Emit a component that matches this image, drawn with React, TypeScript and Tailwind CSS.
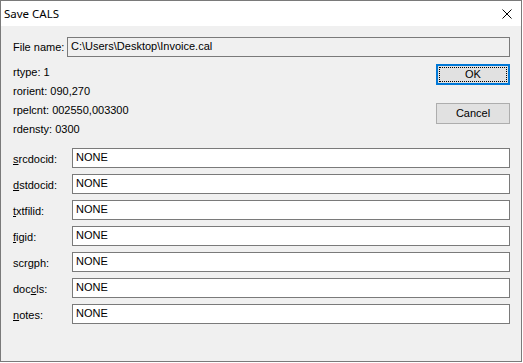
import React from "react";

const font = { fontFamily: '"Liberation Sans", Arial, sans-serif' };

function Field({ label, u, value }: { label: [string, string, string]; u?: boolean; value: string }) {
  return (
    <div className="flex h-[20px] items-center">
      <div className="w-[59px] pt-[2px] text-[11px] leading-[13px] text-black">
        {label[0]}
        <span className="underline decoration-1 underline-offset-[1px]">{label[1]}</span>
        {label[2]}
      </div>
      <div className="flex h-[20px] flex-1 items-start border border-[#7a7a7a] bg-white pl-[3px] pt-[2px] text-[11px] leading-[13px] text-black">
        {value}
      </div>
    </div>
  );
}

export default function App() {
  const fields: [string, string, string][] = [
    ["", "s", "rcdocid:"],
    ["", "d", "stdocid:"],
    ["", "t", "xtfilid:"],
    ["", "f", "igid:"],
    ["scr", "g", "ph:"],
    ["doc", "c", "ls:"],
    ["", "n", "otes:"],
  ];
  return (
    <div className="h-[363px] w-[523px] bg-white" style={font}>
      <div className="flex h-[362px] w-[522px] flex-col border border-[#7a7a7a] bg-[#f0f0f0]">
        <div className="flex h-[25px] items-center justify-between bg-white pl-[3px] pr-[9px]">
          <span className="text-[12px] leading-[14px] text-black" style={{ fontFamily: '"Noto Sans", "Liberation Sans", sans-serif', fontSize: "11.5px" }}>
            Save CALS
          </span>
          <svg width="10" height="10" viewBox="0 0 10 10" className="mt-[1px]">
            <path d="M0.5 0.5 L9.5 9.5 M9.5 0.5 L0.5 9.5" stroke="#000" strokeWidth="1" fill="none" />
          </svg>
        </div>
        <div className="flex flex-col pl-[12px] pr-[11px]">
          <div className="mt-[11px] flex h-[20px] items-center">
            <div className="w-[54px] text-[11px] leading-[13px] text-black">File name:</div>
            <div className="flex h-[20px] w-[443px] items-start border border-[#7a7a7a] bg-[#f0f0f0] pl-[3px] pt-[2px] text-[11px] leading-[13px] text-black">
              C:\Users\Desktop\Invoice.cal
            </div>
          </div>
          <div className="mt-[6px] flex justify-between">
            <div className="flex flex-col text-[11px] leading-[19px] text-black">
              <div className="h-[19px]">rtype: 1</div>
              <div className="h-[19px]">rorient: 090,270</div>
              <div className="h-[19px]">rpelcnt: 002550,003300</div>
              <div className="h-[19px]">rdensty: 0300</div>
            </div>
            <div className="flex flex-col pt-[1px]">
              <div className="relative flex h-[21px] w-[74px] items-center justify-center border-2 border-[#0078d7] bg-[#e1e1e1] text-[11px] leading-[13px] text-black">
                <span className="absolute inset-[1px] border border-dotted border-black" />
                OK
              </div>
              <div className="mt-[18px] flex h-[21px] w-[74px] items-center justify-center border border-[#adadad] bg-[#e1e1e1] text-[11px] leading-[13px] text-black">
                Cancel
              </div>
            </div>
          </div>
          <div className="mt-[9px] flex flex-col gap-[6px]">
            {fields.map((f, i) => (
              <Field key={i} label={f} value="NONE" />
            ))}
          </div>
        </div>
      </div>
    </div>
  );
}
